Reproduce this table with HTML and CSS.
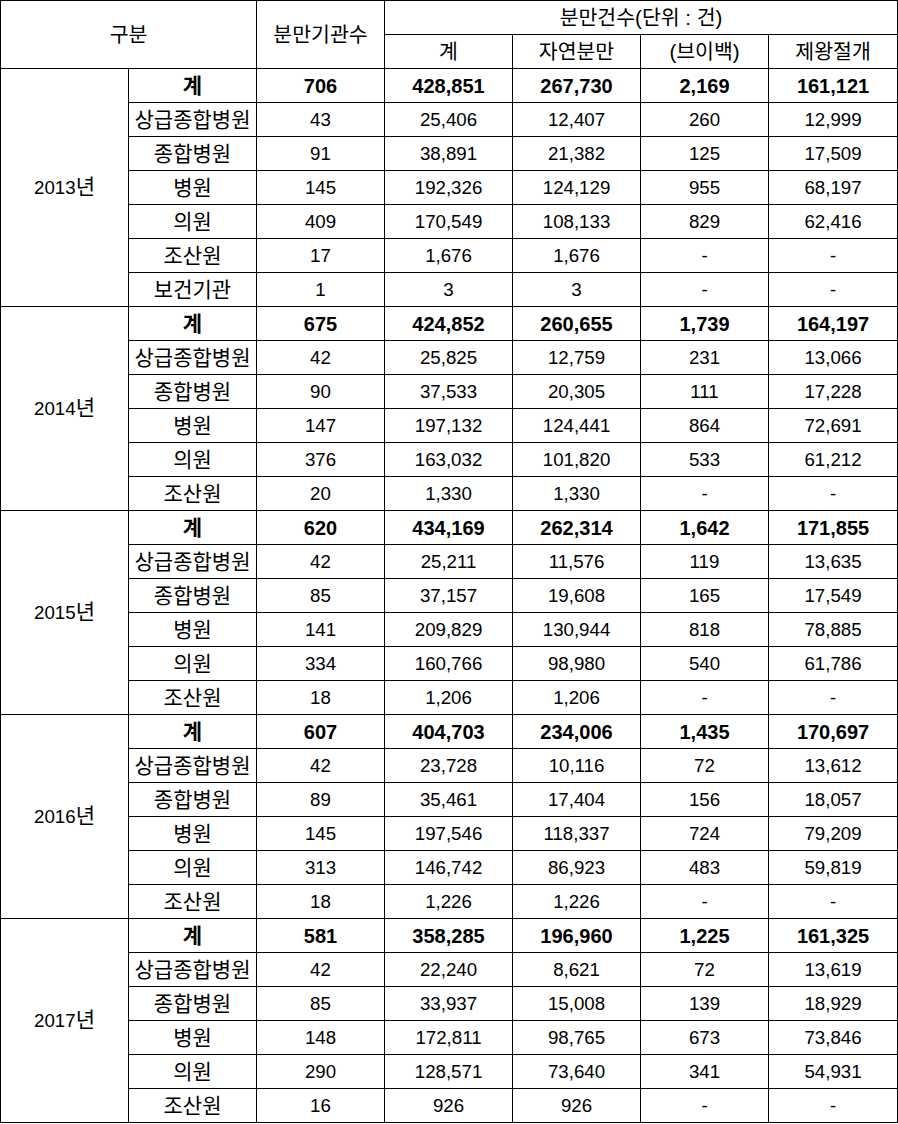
FILE: index.html
```html
<!DOCTYPE html>
<html lang="ko">
<head>
<meta charset="utf-8">
<title>분만기관수 및 분만건수</title>
<link rel="stylesheet" href="styles.css">
</head>
<body>
<table class="stats">
<colgroup>
<col class="c"><col class="c"><col class="c"><col class="c"><col class="c"><col class="c"><col class="c-last">
</colgroup>
<thead>
<tr><th colspan="2" rowspan="2">구분</th><th rowspan="2">분만기관수</th><th colspan="4">분만건수(단위 : 건)</th></tr>
<tr><th>계</th><th>자연분만</th><th>(브이백)</th><th>제왕절개</th></tr>
</thead>
<tbody>
<tr class="total"><td rowspan="7" class="year">2013<span class="k">년</span></td><td>계</td><td>706</td><td>428,851</td><td>267,730</td><td>2,169</td><td>161,121</td></tr>
<tr><td>상급종합병원</td><td>43</td><td>25,406</td><td>12,407</td><td>260</td><td>12,999</td></tr>
<tr><td>종합병원</td><td>91</td><td>38,891</td><td>21,382</td><td>125</td><td>17,509</td></tr>
<tr><td>병원</td><td>145</td><td>192,326</td><td>124,129</td><td>955</td><td>68,197</td></tr>
<tr><td>의원</td><td>409</td><td>170,549</td><td>108,133</td><td>829</td><td>62,416</td></tr>
<tr><td>조산원</td><td>17</td><td>1,676</td><td>1,676</td><td>-</td><td>-</td></tr>
<tr><td>보건기관</td><td>1</td><td>3</td><td>3</td><td>-</td><td>-</td></tr>

<tr class="total"><td rowspan="6" class="year">2014<span class="k">년</span></td><td>계</td><td>675</td><td>424,852</td><td>260,655</td><td>1,739</td><td>164,197</td></tr>
<tr><td>상급종합병원</td><td>42</td><td>25,825</td><td>12,759</td><td>231</td><td>13,066</td></tr>
<tr><td>종합병원</td><td>90</td><td>37,533</td><td>20,305</td><td>111</td><td>17,228</td></tr>
<tr><td>병원</td><td>147</td><td>197,132</td><td>124,441</td><td>864</td><td>72,691</td></tr>
<tr><td>의원</td><td>376</td><td>163,032</td><td>101,820</td><td>533</td><td>61,212</td></tr>
<tr><td>조산원</td><td>20</td><td>1,330</td><td>1,330</td><td>-</td><td>-</td></tr>

<tr class="total"><td rowspan="6" class="year">2015<span class="k">년</span></td><td>계</td><td>620</td><td>434,169</td><td>262,314</td><td>1,642</td><td>171,855</td></tr>
<tr><td>상급종합병원</td><td>42</td><td>25,211</td><td>11,576</td><td>119</td><td>13,635</td></tr>
<tr><td>종합병원</td><td>85</td><td>37,157</td><td>19,608</td><td>165</td><td>17,549</td></tr>
<tr><td>병원</td><td>141</td><td>209,829</td><td>130,944</td><td>818</td><td>78,885</td></tr>
<tr><td>의원</td><td>334</td><td>160,766</td><td>98,980</td><td>540</td><td>61,786</td></tr>
<tr><td>조산원</td><td>18</td><td>1,206</td><td>1,206</td><td>-</td><td>-</td></tr>

<tr class="total"><td rowspan="6" class="year">2016<span class="k">년</span></td><td>계</td><td>607</td><td>404,703</td><td>234,006</td><td>1,435</td><td>170,697</td></tr>
<tr><td>상급종합병원</td><td>42</td><td>23,728</td><td>10,116</td><td>72</td><td>13,612</td></tr>
<tr><td>종합병원</td><td>89</td><td>35,461</td><td>17,404</td><td>156</td><td>18,057</td></tr>
<tr><td>병원</td><td>145</td><td>197,546</td><td>118,337</td><td>724</td><td>79,209</td></tr>
<tr><td>의원</td><td>313</td><td>146,742</td><td>86,923</td><td>483</td><td>59,819</td></tr>
<tr><td>조산원</td><td>18</td><td>1,226</td><td>1,226</td><td>-</td><td>-</td></tr>

<tr class="total"><td rowspan="6" class="year">2017<span class="k">년</span></td><td>계</td><td>581</td><td>358,285</td><td>196,960</td><td>1,225</td><td>161,325</td></tr>
<tr><td>상급종합병원</td><td>42</td><td>22,240</td><td>8,621</td><td>72</td><td>13,619</td></tr>
<tr><td>종합병원</td><td>85</td><td>33,937</td><td>15,008</td><td>139</td><td>18,929</td></tr>
<tr><td>병원</td><td>148</td><td>172,811</td><td>98,765</td><td>673</td><td>73,846</td></tr>
<tr><td>의원</td><td>290</td><td>128,571</td><td>73,640</td><td>341</td><td>54,931</td></tr>
<tr><td>조산원</td><td>16</td><td>926</td><td>926</td><td>-</td><td>-</td></tr>
</tbody>
</table>
</body>
</html>
```
FILE: styles.css
```css
html, body {
  margin: 0;
  padding: 0;
  background: #ffffff;
}

.stats {
  border-collapse: collapse;
  table-layout: fixed;
  width: 897px;
  font-family: "Liberation Sans", "Noto Sans CJK KR", sans-serif;
  font-size: 18.7px;
  color: #000000;
}

.stats .c {
  width: 128px;
}

.stats .c-last {
  width: 129px;
}

.stats th,
.stats td {
  border: 1px solid #000000;
  padding: 0;
  text-align: center;
  vertical-align: middle;
  white-space: nowrap;
  overflow: visible;
  line-height: 22px;
  font-weight: normal;
}

.stats th {
  font-size: 20.5px;
}

.stats tr {
  height: 34px;
}

.stats .total td {
  font-weight: bold;
  font-size: 20px;
}

.stats tbody td:first-child:not(.year),
.stats tbody td.year + td {
  font-size: 21px;
}

.stats .total td.year {
  font-weight: normal;
  font-size: 18.7px;
}

.stats .k {
  font-size: 21px;
}
```
